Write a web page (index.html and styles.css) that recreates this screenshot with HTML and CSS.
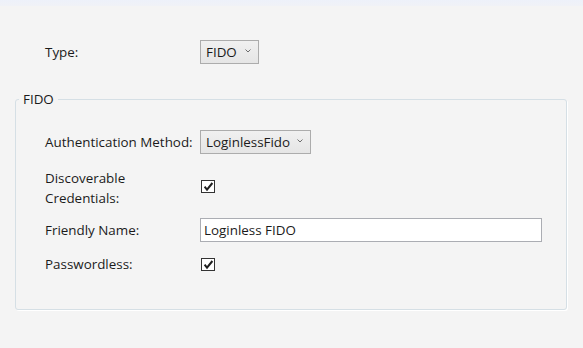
FILE: index.html
```html
<!DOCTYPE html>
<html lang="en">
<head>
<meta charset="utf-8">
<title>FIDO settings</title>
<link rel="stylesheet" href="styles.css">
</head>
<body>
<div class="topbar"></div>
<div class="main">
  <div class="type-row">
    <span class="label">Type:</span>
    <div class="combo combo-type">
      <span class="combo-text">FIDO</span>
      <svg class="chev" width="6" height="4" viewBox="0 0 6 4"><path d="M0.5 0.5 L3 3 L5.5 0.5" fill="none" stroke="#6d6d6d" stroke-width="1"/></svg>
    </div>
  </div>

  <fieldset class="group">
    <legend class="group-title">FIDO</legend>
    <div class="form">
      <span class="label">Authentication Method:</span>
      <div class="cell">
        <div class="combo combo-auth">
          <span class="combo-text">LoginlessFido</span>
          <svg class="chev" width="6" height="4" viewBox="0 0 6 4"><path d="M0.5 0.5 L3 3 L5.5 0.5" fill="none" stroke="#6d6d6d" stroke-width="1"/></svg>
        </div>
      </div>

      <span class="label label-multi">Discoverable<br>Credentials:</span>
      <div class="cell">
        <span class="check"><svg width="11" height="11" viewBox="0 0 11 11"><path d="M1.6 5.6 L4 8.6 L9.4 2" fill="none" stroke="#1f1f1f" stroke-width="2"/></svg></span>
      </div>

      <span class="label">Friendly Name:</span>
      <div class="cell">
        <div class="textbox">Loginless FIDO</div>
      </div>

      <span class="label">Passwordless:</span>
      <div class="cell">
        <span class="check"><svg width="11" height="11" viewBox="0 0 11 11"><path d="M1.6 5.6 L4 8.6 L9.4 2" fill="none" stroke="#1f1f1f" stroke-width="2"/></svg></span>
      </div>
    </div>
  </fieldset>
</div>
</body>
</html>
```
FILE: styles.css
```css
html, body {
  margin: 0;
  padding: 0;
}
body {
  width: 583px;
  height: 348px;
  background: #f4f4f4;
  font-family: "Open Sans", "Noto Sans", sans-serif;
  font-size: 13.4px;
  color: #1b1b1b;
  overflow: hidden;
}
.topbar {
  height: 6px;
  background: linear-gradient(#edf1fa, #f0f2f7);
}
.main {
  padding: 0 0 0 15px;
}
.type-row {
  display: grid;
  grid-template-columns: 155px auto;
  align-items: center;
  height: 24px;
  margin-top: 34px;
  padding-left: 30px;
}
.label {
  line-height: 20px;
  white-space: nowrap;
}
.label-multi {
  padding-top: 3px;
}
.combo {
  box-sizing: border-box;
  height: 24px;
  display: flex;
  align-items: center;
  border: 1px solid #acacac;
  background: linear-gradient(#f0f0f0, #e5e5e5);
  padding-left: 5px;
}
.combo-type {
  width: 59px;
}
.combo-auth {
  width: 111px;
}
.combo-text {
  line-height: 20px;
}
.chev {
  margin-left: auto;
  margin-right: 7px;
  margin-top: -3px;
}
.group {
  box-sizing: border-box;
  width: 552px;
  min-width: 0;
  margin: 27px 0 0 0;
  padding: 0 0 35px 0;
  border: 1px solid #d5dfe5;
  border-radius: 3px;
  box-shadow: 1px 1px 0 #ffffff;
}
.group-title {
  margin-left: 3px;
  padding: 0 4px;
  line-height: 16px;
}
.form {
  display: grid;
  grid-template-columns: 155px 342px;
  grid-template-rows: 24px 40px 24px 20px;
  row-gap: 12px;
  align-items: center;
  padding: 23px 0 0 29px;
}
.cell {
  display: flex;
  align-items: center;
}
.check {
  box-sizing: border-box;
  width: 14px;
  height: 13px;
  margin-left: 1px;
  border: 1px solid #333333;
  background: #ffffff;
  display: flex;
  align-items: center;
  justify-content: center;
}
.textbox {
  box-sizing: border-box;
  width: 342px;
  height: 24px;
  border: 1px solid #abadb3;
  background: #ffffff;
  padding: 0 3px;
  line-height: 22px;
}
```
